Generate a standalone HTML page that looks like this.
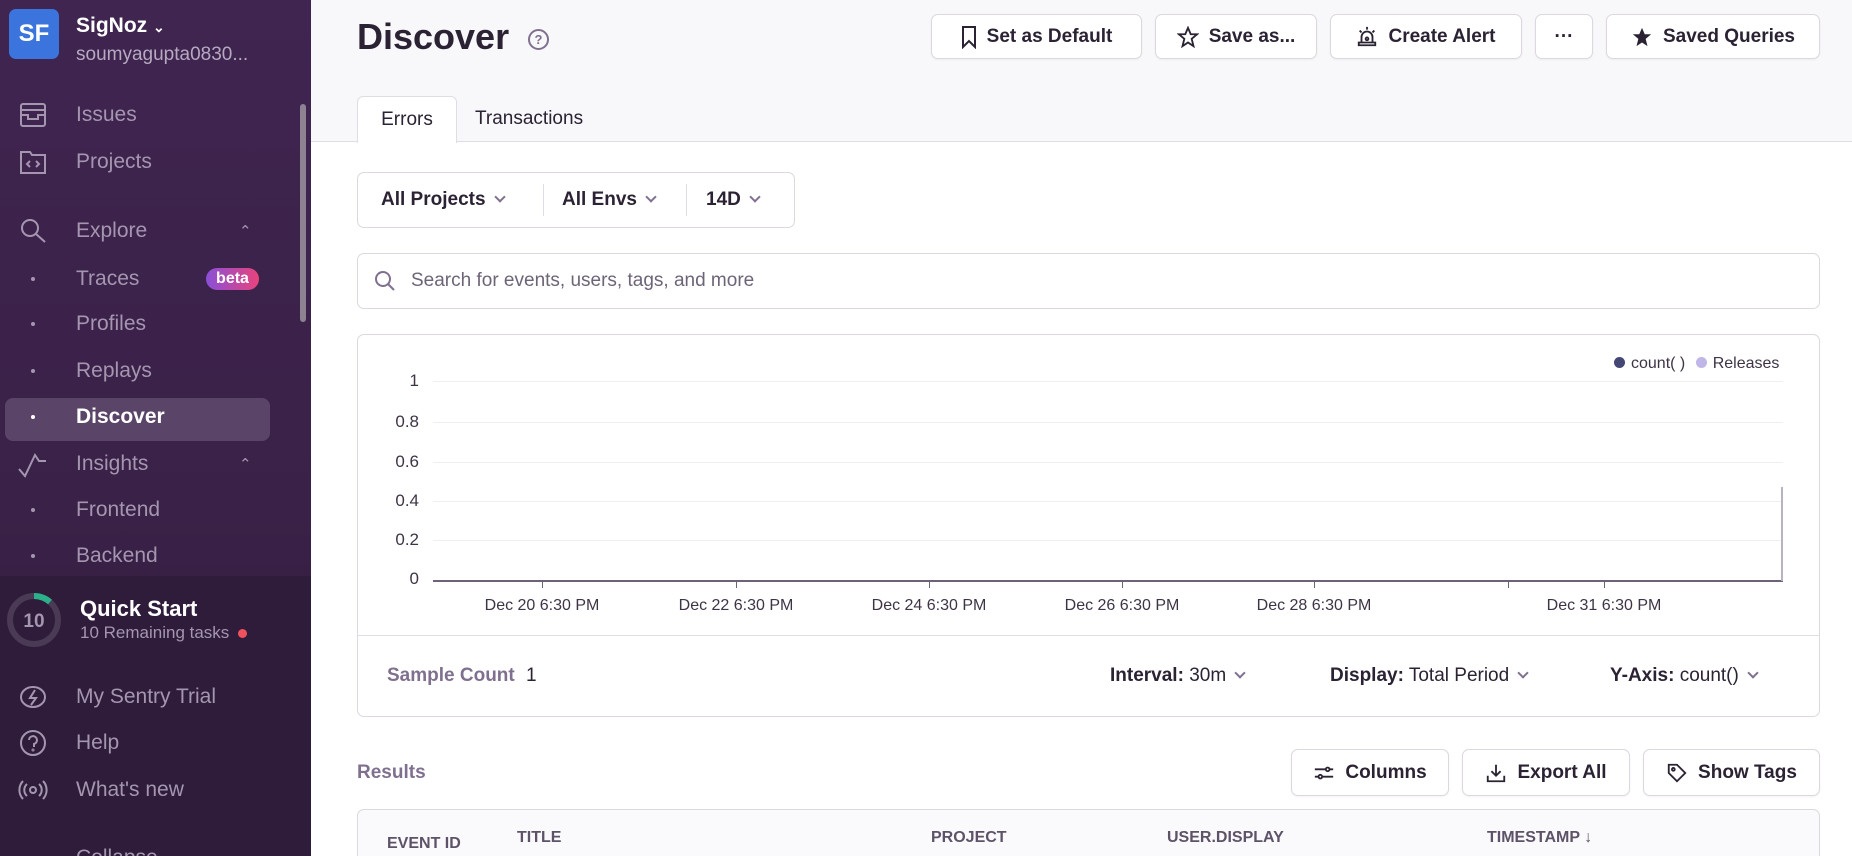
<!DOCTYPE html>
<html style="width:1852px;height:856px;overflow:hidden"><head><style>
*{box-sizing:border-box;margin:0;padding:0}
body{width:1852px;height:856px;overflow:hidden;font-family:"Liberation Sans",sans-serif;color:#2b2233;background:#fff;position:relative}
.abs{position:absolute}
#sb{left:0;top:0;width:311px;height:856px;background:linear-gradient(180deg,#3f2550 0%,#3a2147 60%,#2f1b3c 100%);overflow:hidden}
.nav{position:absolute;left:76px;font-size:21px;color:#a596b0;transform:translateY(-50%)}
.dot{position:absolute;left:31px;width:4px;height:4px;border-radius:2px;background:#a596b0}
.ico{position:absolute;left:18px;width:30px;height:30px;transform:translateY(-50%)}
.btn{position:absolute;top:14px;height:45px;border:1px solid #dcd7e0;border-radius:7px;background:#fff;font-size:19px;font-weight:bold;display:flex;align-items:center;justify-content:center;gap:10px;box-shadow:0 1px 2px rgba(0,0,0,.05)}
.ylab{position:absolute;right:1433px;font-size:17px;color:#3e3446;transform:translateY(-50%)}
.grid{position:absolute;left:433px;width:1350px;height:1px;background:#f0eef2}
.xlab{position:absolute;top:597px;font-size:16px;color:#3e3446;transform:translateX(-50%);white-space:nowrap}
.th{position:absolute;top:831px;font-size:16px;font-weight:bold;color:#5d5268}
.chev{display:inline-block;width:8px;height:8px;border-right:2px solid #80708f;border-bottom:2px solid #80708f;transform:rotate(45deg);margin-left:10px;position:relative;top:-4px}
</style></head><body>
<div id="sb" class="abs">
 <div class="abs" style="left:9px;top:9px;width:50px;height:50px;border-radius:7px;background:#3c74dd;color:#fff;font-size:24px;font-weight:bold;display:flex;align-items:center;justify-content:center">SF</div>
 <div class="abs" style="left:76px;top:14px;font-size:21px;font-weight:bold;color:#fff">SigNoz <span style="font-size:14px">&#8964;</span></div>
 <div class="abs" style="left:76px;top:44px;font-size:19px;color:#b6a9c0">soumyagupta0830...</div>
 <div class="abs" style="left:300px;top:104px;width:6px;height:218px;background:#8c8292;border-radius:3px"></div>
 <svg class="ico" style="top:115px" viewBox="0 0 30 30" fill="none" stroke="#a596b0" stroke-width="2"><rect x="3" y="4" width="24" height="22" rx="2"/><path d="M3 10h24M3 15h7v4h10v-4h7"/></svg>
 <div class="nav" style="top:115px">Issues</div>
 <svg class="ico" style="top:162px" viewBox="0 0 30 30" fill="none" stroke="#a596b0" stroke-width="2"><path d="M3 5h9l2 3h13v18H3z"/><path d="M12 14l-3 3 3 3M18 14l3 3-3 3"/></svg>
 <div class="nav" style="top:162px">Projects</div>
 <svg class="ico" style="top:231px" viewBox="0 0 30 30" fill="none" stroke="#a596b0" stroke-width="2"><circle cx="12" cy="12" r="8"/><path d="M18 18l9 8"/></svg>
 <div class="nav" style="top:231px">Explore</div><div class="abs" style="left:239px;top:222px;color:#a596b0;font-size:15px">&#8963;</div>
 <div class="dot" style="top:277px"></div><div class="nav" style="top:279px">Traces</div>
 <div class="abs" style="left:206px;top:268px;width:53px;height:22px;border-radius:11px;background:linear-gradient(90deg,#8a4fd8,#e8437c);color:#fff;font-size:16px;font-weight:bold;text-align:center;line-height:22px">beta</div>
 <div class="dot" style="top:322px"></div><div class="nav" style="top:324px">Profiles</div>
 <div class="dot" style="top:369px"></div><div class="nav" style="top:371px">Replays</div>
 <div class="abs" style="left:5px;top:398px;width:265px;height:43px;border-radius:8px;background:#5a4568"></div>
 <div class="dot" style="top:415px;background:#fff"></div><div class="nav" style="top:417px;color:#fff;font-weight:bold">Discover</div>
 <svg class="ico" style="top:464px" viewBox="0 0 30 30" fill="none" stroke="#a596b0" stroke-width="2"><path d="M1 20l6 7L17 6l4 6h7"/></svg>
 <div class="nav" style="top:464px">Insights</div><div class="abs" style="left:239px;top:455px;color:#a596b0;font-size:15px">&#8963;</div>
 <div class="dot" style="top:508px"></div><div class="nav" style="top:510px">Frontend</div>
 <div class="dot" style="top:554px"></div><div class="nav" style="top:556px">Backend</div>
 <div class="abs" style="left:0;top:576px;width:311px;height:280px;background:#2f1c3b"></div>
 <svg class="abs" style="left:5px;top:591px" width="58" height="58" viewBox="0 0 58 58"><circle cx="29" cy="29" r="24" fill="none" stroke="#4a3a55" stroke-width="6"/><path d="M29 5a24 24 0 0 1 16 6" fill="none" stroke="#2bb08a" stroke-width="6"/><text x="29" y="36" font-size="19" font-weight="bold" fill="#a596b0" text-anchor="middle" font-family="Liberation Sans">10</text></svg>
 <div class="abs" style="left:80px;top:596px;font-size:22px;font-weight:bold;color:#fff">Quick Start</div>
 <div class="abs" style="left:80px;top:623px;font-size:17px;color:#a596b0">10 Remaining tasks <span style="display:inline-block;width:9px;height:9px;border-radius:5px;background:#f0525d;margin-left:4px"></span></div>
 <svg class="ico" style="top:697px" viewBox="0 0 30 30" fill="none" stroke="#a596b0" stroke-width="2"><ellipse cx="15" cy="15" rx="12" ry="10"/><path d="M17 8l-5 8h6l-5 7"/></svg>
 <div class="nav" style="top:697px">My Sentry Trial</div>
 <svg class="ico" style="top:743px" viewBox="0 0 30 30" fill="none" stroke="#a596b0" stroke-width="2"><circle cx="15" cy="15" r="12"/><path d="M11 12a4 4 0 1 1 5 4v3"/><circle cx="15" cy="22" r=".5"/></svg>
 <div class="nav" style="top:743px">Help</div>
 <svg class="ico" style="top:790px" viewBox="0 0 30 30" fill="none" stroke="#a596b0" stroke-width="2"><circle cx="15" cy="15" r="3"/><path d="M9 9a8 8 0 0 0 0 12M21 9a8 8 0 0 1 0 12M5 6a13 13 0 0 0 0 18M25 6a13 13 0 0 1 0 18"/></svg>
 <div class="nav" style="top:790px">What's new</div>
 <div class="abs" style="left:76px;top:846px;font-size:21px;color:#a596b0">Collapse</div>
</div>
<div class="abs" style="left:311px;top:0;width:1541px;height:142px;background:#f8f8fa;border-bottom:1px solid #e0dce5"></div>
<div class="abs" style="left:357px;top:16px;font-size:36px;font-weight:bold">Discover</div>
<div class="abs" style="left:528px;top:29px;width:21px;height:21px;border:2px solid #80708f;border-radius:50%;font-size:13px;color:#80708f;text-align:center;line-height:17px;font-weight:bold">?</div>
<div class="abs" style="left:357px;top:96px;width:100px;height:47px;background:#fff;border:1px solid #e0dce5;border-bottom:none;border-radius:6px 6px 0 0;font-size:19px;text-align:center;line-height:46px">Errors</div>
<div class="abs" style="left:475px;top:108px;font-size:19px">Transactions</div>
<div class="btn" style="left:931px;width:211px"><svg width="16" height="24" viewBox="0 0 16 24" fill="none" stroke="#2b2233" stroke-width="2"><path d="M2 2h12v20l-6-6-6 6z"/></svg>Set as Default</div>
<div class="btn" style="left:1155px;width:162px"><svg width="22" height="22" viewBox="0 0 24 24" fill="none" stroke="#2b2233" stroke-width="2"><path d="M12 2l3 7h7l-6 5 2 8-6-4-6 4 2-8-6-5h7z"/></svg>Save as...</div>
<div class="btn" style="left:1330px;width:192px"><svg width="22" height="22" viewBox="0 0 24 24" fill="none" stroke="#2b2233" stroke-width="2"><path d="M6 18v-6a6 6 0 0 1 12 0v6M3 18h18v3H3zM12 1v3M4 5l2 2M20 5l-2 2"/><circle cx="12" cy="14" r="1.5"/></svg>Create Alert</div>
<div class="btn" style="left:1535px;width:58px">&middot;&middot;&middot;</div>
<div class="btn" style="left:1606px;width:214px"><svg width="22" height="22" viewBox="0 0 24 24" fill="#2b2233"><path d="M12 2l3 7h7l-6 5 2 8-6-4-6 4 2-8-6-5h7z"/></svg>Saved Queries</div>
<div class="abs" style="left:357px;top:172px;width:438px;height:56px;border:1px solid #dcd7e0;border-radius:7px"></div>
<div class="abs" style="left:543px;top:184px;width:1px;height:32px;background:#e0dce5"></div>
<div class="abs" style="left:686px;top:184px;width:1px;height:32px;background:#e0dce5"></div>
<div class="abs" style="left:381px;top:189px;font-size:19px;font-weight:bold">All Projects<span class="chev"></span></div>
<div class="abs" style="left:562px;top:189px;font-size:19px;font-weight:bold">All Envs<span class="chev"></span></div>
<div class="abs" style="left:706px;top:189px;font-size:19px;font-weight:bold">14D<span class="chev"></span></div>
<div class="abs" style="left:357px;top:253px;width:1463px;height:56px;border:1px solid #dcd7e0;border-radius:7px"></div>
<svg class="abs" style="left:373px;top:269px" width="24" height="24" viewBox="0 0 24 24" fill="none" stroke="#80708f" stroke-width="2"><circle cx="10" cy="10" r="7"/><path d="M15 15l6 6"/></svg>
<div class="abs" style="left:411px;top:270px;font-size:19px;color:#6e6478">Search for events, users, tags, and more</div>
<div class="abs" style="left:357px;top:334px;width:1463px;height:383px;border:1px solid #dcd7e0;border-radius:7px"></div>
<div class="abs" style="left:357px;top:635px;width:1463px;height:1px;background:#e0dce5"></div>
<div class="abs" style="left:1614px;top:355px;font-size:16px;color:#3e3446"><span style="display:inline-block;width:11px;height:11px;border-radius:6px;background:#444674;margin-right:6px"></span>count( ) <span style="display:inline-block;width:11px;height:11px;border-radius:6px;background:#c0b6e8;margin:0 6px 0 6px"></span>Releases</div>
<div class="ylab" style="top:381px">1</div><div class="grid" style="top:381px"></div>
<div class="ylab" style="top:422px">0.8</div><div class="grid" style="top:422px"></div>
<div class="ylab" style="top:462px">0.6</div><div class="grid" style="top:462px"></div>
<div class="ylab" style="top:501px">0.4</div><div class="grid" style="top:501px"></div>
<div class="ylab" style="top:540px">0.2</div><div class="grid" style="top:540px"></div>
<div class="ylab" style="top:579px">0</div>
<div class="abs" style="left:433px;top:580px;width:1350px;height:2px;background:#6c6378"></div>
<div class="abs" style="left:1781px;top:487px;width:2px;height:94px;background:#b8b3bf"></div>
<div class="abs" style="left:542px;top:582px;width:1px;height:6px;background:#6c6378"></div>
<div class="abs" style="left:736px;top:582px;width:1px;height:6px;background:#6c6378"></div>
<div class="abs" style="left:929px;top:582px;width:1px;height:6px;background:#6c6378"></div>
<div class="abs" style="left:1122px;top:582px;width:1px;height:6px;background:#6c6378"></div>
<div class="abs" style="left:1314px;top:582px;width:1px;height:6px;background:#6c6378"></div>
<div class="abs" style="left:1508px;top:582px;width:1px;height:6px;background:#6c6378"></div>
<div class="abs" style="left:1604px;top:582px;width:1px;height:6px;background:#6c6378"></div>
<div class="xlab" style="left:542px">Dec 20 6:30 PM</div>
<div class="xlab" style="left:736px">Dec 22 6:30 PM</div>
<div class="xlab" style="left:929px">Dec 24 6:30 PM</div>
<div class="xlab" style="left:1122px">Dec 26 6:30 PM</div>
<div class="xlab" style="left:1314px">Dec 28 6:30 PM</div>
<div class="xlab" style="left:1604px">Dec 31 6:30 PM</div>
<div class="abs" style="left:387px;top:665px;font-size:19px;font-weight:bold;color:#80708f">Sample Count <span style="font-weight:normal;color:#2b2233;margin-left:6px">1</span></div>
<div class="abs" style="left:1110px;top:665px;font-size:19px"><b>Interval:</b> 30m<span class="chev"></span></div>
<div class="abs" style="left:1330px;top:665px;font-size:19px"><b>Display:</b> Total Period<span class="chev"></span></div>
<div class="abs" style="left:1610px;top:665px;font-size:19px"><b>Y-Axis:</b> count()<span class="chev"></span></div>
<div class="abs" style="left:357px;top:762px;font-size:19px;font-weight:bold;color:#80708f">Results</div>
<div class="btn" style="left:1291px;top:749px;width:158px;height:47px"><svg width="22" height="22" viewBox="0 0 24 24" fill="none" stroke="#2b2233" stroke-width="2"><path d="M2 8h12M18 8h4M2 16h4M10 16h12"/><circle cx="16" cy="8" r="2"/><circle cx="8" cy="16" r="2"/></svg>Columns</div>
<div class="btn" style="left:1462px;top:749px;width:168px;height:47px"><svg width="22" height="22" viewBox="0 0 24 24" fill="none" stroke="#2b2233" stroke-width="2"><path d="M12 3v12M7 10l5 5 5-5M3 15v6h18v-6"/></svg>Export All</div>
<div class="btn" style="left:1643px;top:749px;width:177px;height:47px"><svg width="22" height="22" viewBox="0 0 24 24" fill="none" stroke="#2b2233" stroke-width="2"><path d="M3 3h9l9 9-9 9-9-9z"/><circle cx="8" cy="8" r="1.5"/></svg>Show Tags</div>
<div class="abs" style="left:357px;top:809px;width:1463px;height:60px;border:1px solid #dcd7e0;border-radius:7px 7px 0 0;background:#faf9fb"></div>
<div class="th" style="left:387px;top:835px">EVENT ID</div>
<div class="th" style="left:517px;top:829px">TITLE</div>
<div class="th" style="left:931px;top:829px">PROJECT</div>
<div class="th" style="left:1167px;top:829px">USER.DISPLAY</div>
<div class="th" style="left:1487px;top:829px">TIMESTAMP &#8595;</div>
</body></html>
